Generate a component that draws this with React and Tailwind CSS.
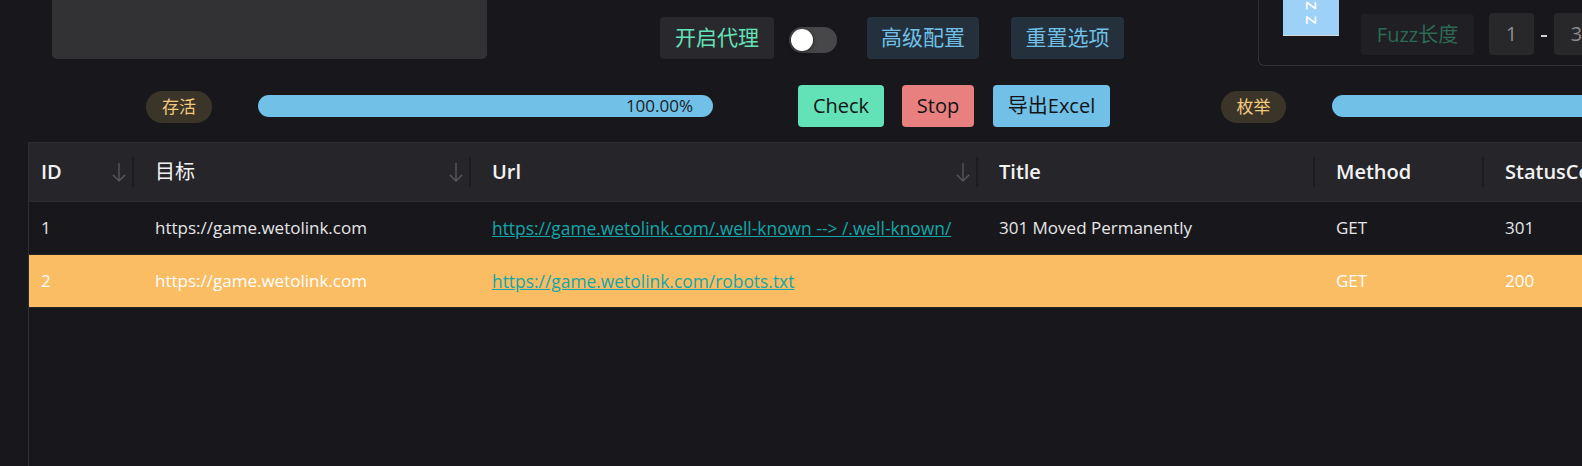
import React from "react";

const font = { fontFamily: '"Open Sans", "Noto Sans CJK SC", sans-serif' };

const SortArrow = () => (
  <svg width="14" height="20" viewBox="0 0 14 20" fill="none" stroke="#5e5e62" strokeWidth="1.2">
    <line x1="7" y1="1" x2="7" y2="19" />
    <polyline points="1,13 7,19 13,13" />
  </svg>
);

const columns = [
  { label: "ID", width: "w-[114px]", sort: true },
  { label: "目标", width: "w-[337px]", sort: true, cjk: true },
  { label: "Url", width: "w-[507px]", sort: true },
  { label: "Title", width: "w-[337px]" },
  { label: "Method", width: "w-[169px]" },
  { label: "StatusCode", width: "w-[200px]", last: true },
];

const rows = [
  {
    id: "1",
    target: "https://game.wetolink.com",
    url: "https://game.wetolink.com/.well-known --> /.well-known/",
    title: "301 Moved Permanently",
    method: "GET",
    status: "301",
  },
  {
    id: "2",
    target: "https://game.wetolink.com",
    url: "https://game.wetolink.com/robots.txt",
    title: "",
    method: "GET",
    status: "200",
    hit: true,
  },
];

const App = () => {
  return (
    <div className="w-[1582px] h-[466px] overflow-hidden bg-[#18181c] flex flex-col" style={font}>
      {/* top bar */}
      <div className="flex h-[66px] shrink-0">
        <div className="ml-[52px] h-[59px] w-[435px] shrink-0 rounded-b-[5px] bg-[#323234]" />
        <div className="ml-[173px] mt-[17px] flex items-start shrink-0">
          <button className="w-[114px] h-[42px] shrink-0 rounded-[4px] bg-[#29292d] text-[21px] text-[#63e2b7]">
            开启代理
          </button>
          <div className="ml-[15px] mt-[10px] w-[48px] h-[26px] shrink-0 rounded-full bg-[#47474a] relative">
            <div className="absolute left-[2px] top-[2px] w-[22px] h-[22px] rounded-full bg-white shadow-[0_1px_4px_rgba(0,0,0,0.5)]" />
          </div>
          <button className="ml-[30px] w-[112px] h-[42px] shrink-0 rounded-[4px] bg-[#24313c] text-[21px] text-[#70c0e8]">
            高级配置
          </button>
          <button className="ml-[32px] w-[113px] h-[42px] shrink-0 rounded-[4px] bg-[#24313c] text-[21px] text-[#70c0e8]">
            重置选项
          </button>
        </div>
        <div className="ml-[134px] w-[400px] shrink-0 h-[66px] border-l border-b border-[#333337] rounded-bl-[6px] flex items-start">
          <div className="ml-[24px] w-[56px] h-[36px] shrink-0 bg-[#9dd1f7] border-b border-[#d8d8d8] overflow-hidden flex flex-col justify-end items-center pb-[5px]">
            <span className="[writing-mode:vertical-rl] text-[15px] font-semibold text-white tracking-[6px] leading-none">
              FUZZ
            </span>
          </div>
          <div className="ml-[22px] mt-[14px] w-[113px] h-[41px] shrink-0 rounded-[4px] bg-[#202024] flex items-center justify-center text-[20px] text-[#2c6a53]">
            Fuzz长度
          </div>
          <div className="ml-[15px] mt-[13px] w-[45px] h-[42px] shrink-0 rounded-[4px] bg-[#28282b] flex items-center justify-center text-[20px] text-[#8c8c90]">
            1
          </div>
          <div className="ml-[7px] mt-[35px] w-[6px] h-[2px] shrink-0 bg-[#d0d0d0]" />
          <div className="ml-[7px] mt-[13px] w-[45px] h-[42px] shrink-0 rounded-[4px] bg-[#28282b] flex items-center justify-center text-[20px] text-[#8c8c90]">
            3
          </div>
        </div>
      </div>

      {/* progress row */}
      <div className="flex items-center h-[76px] pt-[4px] shrink-0">
        <span className="ml-[146px] mt-[2px] w-[66px] h-[32px] shrink-0 rounded-full bg-[#3b3428] text-[#f2c97d] text-[17px] flex items-center justify-center">
          存活
        </span>
        <div className="ml-[46px] w-[455px] h-[22px] shrink-0 rounded-full bg-[#70c0e8] flex items-center justify-end pr-[20px] text-[17px] text-[#1c1c1e]">
          100.00%
        </div>
        <button className="ml-[85px] w-[86px] h-[42px] shrink-0 rounded-[4px] bg-[#63e2b7] text-[20px] text-[#141414]">
          Check
        </button>
        <button className="ml-[18px] w-[72px] h-[42px] shrink-0 rounded-[4px] bg-[#e88080] text-[20px] text-[#141414]">
          Stop
        </button>
        <button className="ml-[19px] w-[117px] h-[42px] shrink-0 rounded-[4px] bg-[#70c0e8] text-[20px] text-[#141414] whitespace-nowrap">
          导出Excel
        </button>
        <span className="ml-[111px] mt-[2px] w-[65px] h-[32px] shrink-0 rounded-full bg-[#3b3428] text-[#f2c97d] text-[17px] flex items-center justify-center">
          枚举
        </span>
        <div className="ml-[46px] w-[455px] h-[22px] shrink-0 rounded-full bg-[#70c0e8]" />
      </div>

      {/* table */}
      <div className="ml-[28px] flex-1 border-l border-t border-[#2f2f33] w-[1600px] shrink-0">
        <div className="flex h-[59px] bg-[#26262a] border-b border-[#2c2c30]">
          {columns.map((col) => (
            <div key={col.label} className={`${col.width} shrink-0 flex items-center pl-[12px]`}>
              <span
                className={`text-[20px] text-[#f2f2f2] ${col.cjk ? "font-normal" : "font-semibold"}`}
              >
                {col.label}
              </span>
              <div className="flex-1" />
              {col.sort && <SortArrow />}
              {!col.last && (
                <div className="ml-[6px] mr-[9px] w-[2px] h-[30px] bg-[#1d1d21]" />
              )}
            </div>
          ))}
        </div>
        {rows.map((row) => (
          <div
            key={row.id}
            className={`flex h-[53px] items-center border-b border-[#262629] text-[17px] ${
              row.hit ? "bg-[#fabd63] text-white" : "text-[#e6e6e7]"
            }`}
          >
            <div className="w-[114px] shrink-0 pl-[12px]">{row.id}</div>
            <div className="w-[337px] shrink-0 pl-[12px]">{row.target}</div>
            <div className="w-[507px] shrink-0 pl-[12px] whitespace-pre">
              <a className="text-[#14a6a8] underline text-[17.4px]">{row.url}</a>
            </div>
            <div className="w-[337px] shrink-0 pl-[12px]">{row.title}</div>
            <div className="w-[169px] shrink-0 pl-[12px]">{row.method}</div>
            <div className="w-[200px] shrink-0 pl-[12px]">{row.status}</div>
          </div>
        ))}
      </div>
    </div>
  );
};

export default App;
